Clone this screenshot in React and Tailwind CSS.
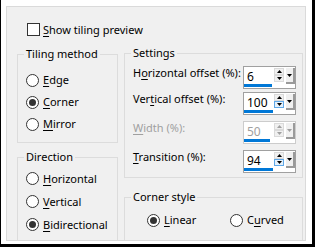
import React from 'react';

const Key = ({ children }) => <span className="underline underline-offset-[2px] decoration-[1px]">{children}</span>;

const Radio = ({ checked, children, className = '' }) => (
  <div className={`flex items-center h-[22px] ${className}`}>
    <span className="w-[13px] h-[13px] rounded-full border border-[#333333] bg-white flex items-center justify-center shrink-0">
      {checked && <span className="w-[7px] h-[7px] rounded-full bg-[#333333]" />}
    </span>
    <span className="ml-[4px] leading-[16px] whitespace-nowrap">{children}</span>
  </div>
);

// group box; inner padding lives on the child div so the legend stays put
const Group = ({ title, className = '', inner = '', children }) => (
  <fieldset className={`border border-[#dcdcdc] ${className}`}>
    <legend className="ml-[6px] px-[2px] leading-[16px]">{title}</legend>
    <div className={inner}>{children}</div>
  </fieldset>
);

const Arrow = ({ up, color = '#000000' }) => (
  <svg width="5" height="3" viewBox="0 0 5 3">
    <polygon points={up ? '2.5,0 5,3 0,3' : '0,0 5,0 2.5,3'} fill={color} />
  </svg>
);

const Spinner = ({ value, bar, focusDown, disabled }) => {
  const ink = disabled ? '#a0a0a0' : '#000000';
  return (
    <div className={`w-[53px] h-[23px] border bg-white flex shrink-0 ${disabled ? 'border-[#cccccc]' : 'border-[#a0a0a0]'}`}>
      <div className="w-[29px] flex flex-col">
        <span className={`pl-[3px] pt-[2px] leading-[15px] h-[17px] text-[12px] ${disabled ? 'text-[#a0a0a0]' : 'text-[#000000]'}`}>{value}</span>
        <div className="h-[3px] bg-[#0078d7]" style={{ width: bar }} />
      </div>
      <div className="ml-[1px] mt-[1px] flex flex-col w-[10px]">
        <div className="h-[7px] border border-[#dadada] bg-[#f0f0f0] flex items-center justify-center">
          <Arrow up color={ink} />
        </div>
        <div className={`h-[7px] border flex items-center justify-center ${focusDown ? 'border-[#5fa8e8] bg-[#e5f1fb]' : 'border-[#dadada] bg-[#f0f0f0]'}`}>
          <Arrow color={ink} />
        </div>
      </div>
      <div className="ml-[2px] mt-[1px] w-[9px] h-[16px] bg-[#f0f0f0] border-r-2 border-b-2 border-[#9a9a9a] flex items-center justify-center">
        <Arrow color={ink} />
      </div>
    </div>
  );
};

const Row = ({ label, disabled, className = '', ...spin }) => (
  <div className={`flex items-start justify-between pl-[8px] pr-[6px] ${className}`}>
    <span className={`mt-[-1px] leading-[16px] whitespace-nowrap ${disabled ? 'text-[#a0a0a0]' : ''}`}>{label}</span>
    <Spinner disabled={disabled} {...spin} />
  </div>
);

export default function App() {
  return (
    <div
      className="w-[315px] h-[247px] bg-white border-l border-r-[3px] border-b-[3px] border-black pl-[5px] pr-[6px] pt-[6px] pb-[3px] text-[11px] text-black"
      style={{ fontFamily: '"Noto Sans", "Open Sans", sans-serif' }}
    >
      <div className="w-[300px] h-[235px] bg-[#f0f0f0] border border-[#dadada] overflow-hidden">
        <div className="flex items-center h-[13px] mt-[16px] ml-[20px]">
          <span className="w-[13px] h-[13px] border border-[#333333] bg-white" />
          <span className="ml-[3px] leading-[16px]"><Key>S</Key>how tiling preview</span>
        </div>

        <div className="flex gap-[6px] mt-[10px] ml-[10px]">
          <div className="w-[101px] flex flex-col">
            <Group title="Tiling method" inner="pl-[8px] pt-[7px] pb-[7px]">
              <Radio><Key>E</Key>dge</Radio>
              <Radio checked><Key>C</Key>orner</Radio>
              <Radio><Key>M</Key>irror</Radio>
            </Group>
            <Group title="Direction" className="mt-[6px] h-[120px]" inner="pl-[8px] pt-[2px]">
              <Radio className="h-[23px]"><Key>H</Key>orizontal</Radio>
              <Radio className="h-[23px]"><Key>V</Key>ertical</Radio>
              <Radio checked className="h-[23px]"><Key>B</Key>idirectional</Radio>
            </Group>
          </div>

          <div className="w-[179px] flex flex-col">
            <Group title="Settings" className="mt-[-1px]" inner="pb-[4px]">
              <Row className="mt-[5px]" label={<>H<Key>o</Key>rizontal offset (%):</>} value="6" bar="28px" />
              <Row className="mt-[3px]" label={<>Ver<Key>t</Key>ical offset (%):</>} value="100" bar="100%" focusDown />
              <Row className="mt-[6px]" disabled label={<><Key>W</Key>idth (%):</>} value="50" bar="26px" />
              <Row className="mt-[6px]" label={<><Key>T</Key>ransition (%):</>} value="94" bar="100%" focusDown />
            </Group>
            <Group title="Corner style" className="mt-[11px] h-[80px]" inner="pl-[22px] pt-[4px]">
              <div className="flex">
                <Radio checked className="w-[83px]"><Key>L</Key>inear</Radio>
                <Radio>C<Key>u</Key>rved</Radio>
              </div>
            </Group>
          </div>
        </div>
      </div>
    </div>
  );
}
